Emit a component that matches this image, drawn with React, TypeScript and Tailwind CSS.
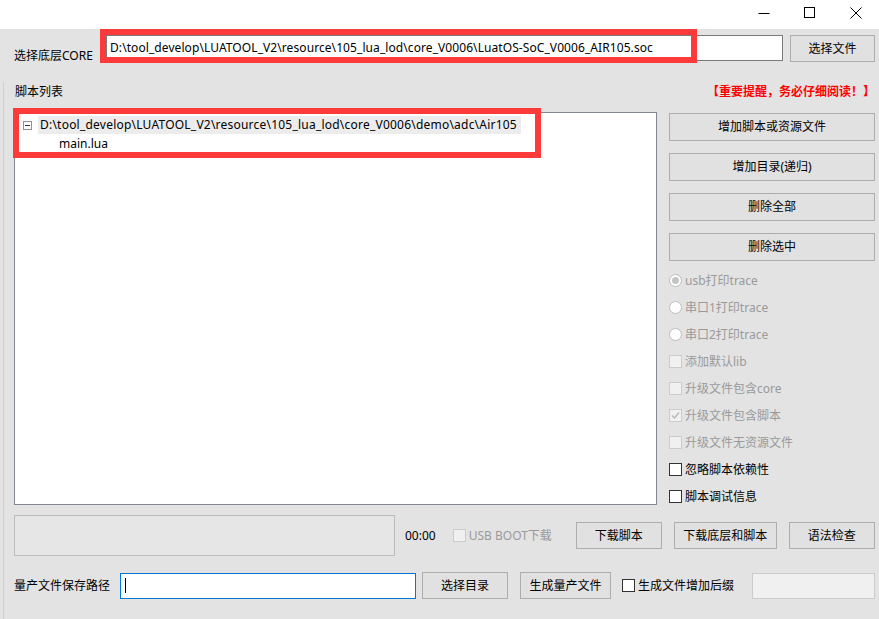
import React from 'react';

const FONT = { fontFamily: '"Noto Sans", "Noto Sans CJK SC", sans-serif' };

function Btn({ label, className = '' }: { label: string; className?: string }) {
  return (
    <div
      className={`h-[27px] flex items-center justify-center bg-[#e1e1e1] border border-[#adadad] text-[12px] text-black ${className}`}
    >
      {label}
    </div>
  );
}

function Radio({ label, checked }: { label: string; checked?: boolean }) {
  return (
    <div className="h-[27px] flex items-center gap-[3px] text-[12px] text-[#9a9a9a]">
      <span className="w-[13px] h-[13px] rounded-full border border-[#bcbcbc] bg-white flex items-center justify-center">
        {checked && <span className="w-[7px] h-[7px] rounded-full bg-[#c4c4c4]" />}
      </span>
      {label}
    </div>
  );
}

function Check({ label, checked, disabled }: { label: string; checked?: boolean; disabled?: boolean }) {
  return (
    <div className={`h-[27px] flex items-center gap-[3px] text-[12px] ${disabled ? 'text-[#9a9a9a]' : 'text-black'}`}>
      <span
        className={`w-[13px] h-[13px] border flex items-center justify-center ${
          disabled ? 'border-[#cccccc] bg-[#f0f0f0]' : 'border-[#333333] bg-white'
        }`}
      >
        {checked && (
          <svg width="9" height="9" viewBox="0 0 9 9">
            <path d="M1 4.5 L3.5 7 L8 1.5" fill="none" stroke="#b5b5b5" strokeWidth="1.2" />
          </svg>
        )}
      </span>
      {label}
    </div>
  );
}

export default function App() {
  return (
    <div className="w-[879px] h-[619px] bg-[#e3e3e3] overflow-hidden text-black" style={FONT}>
      {/* Title bar */}
      <div className="h-[29px] bg-white flex items-start justify-end">
        <div className="w-[46px] h-[26px] flex items-center justify-center">
          <svg width="12" height="12" viewBox="0 0 12 12">
            <path d="M0.5 6.5 H11.5" stroke="#000" strokeWidth="1" />
          </svg>
        </div>
        <div className="w-[46px] h-[26px] flex items-center justify-center">
          <svg width="12" height="12" viewBox="0 0 12 12">
            <rect x="0.5" y="0.5" width="10" height="10" fill="none" stroke="#000" strokeWidth="1" />
          </svg>
        </div>
        <div className="w-[46px] h-[26px] flex items-center justify-center">
          <svg width="12" height="12" viewBox="0 0 12 12">
            <path d="M0.5 0.5 L11.5 11.5 M11.5 0.5 L0.5 11.5" stroke="#000" strokeWidth="1" />
          </svg>
        </div>
      </div>

      {/* Core row */}
      <div className="h-[33px] flex items-start pt-[6px] pl-[14px]">
        <div className="h-[27px] w-[92px] flex items-center text-[12px] pt-[14px]">选择底层CORE</div>
        <div className="relative">
          <div className="w-[677px] h-[26px] bg-white border border-[#7a7a7a] flex items-center pl-[3px] text-[12px] whitespace-nowrap tracking-[0.08px]">
            D:\tool_develop\LUATOOL_V2\resource\105_lua_lod\core_V0006\LuatOS-SoC_V0006_AIR105.soc
          </div>
          <div className="absolute left-[-6px] top-[-6px] w-[597px] h-[34px] border-[6px] border-[#fd3a3a]" />
        </div>
        <Btn label="选择文件" className="ml-[7px] w-[85px]" />
      </div>

      {/* Body */}
      <div className="ml-[3px] h-[557px] border-l border-[#cfcfcf] pl-[10px] pr-[4px]">
        <div className="h-[20px] mt-[20px] flex items-center justify-between text-[12px]">
          <span className="pl-px">脚本列表</span>
          <span className="font-bold text-[#ff0000]">【重要提醒，务必仔细阅读！】</span>
        </div>

        <div className="mt-[10px] h-[393px] flex gap-[12px]">
          {/* Tree */}
          <div className="relative w-[643px] h-[393px] bg-white border border-[#828790]">
            <div className="pt-[3px] pl-[8px] text-[12px]">
              <div className="h-[18px] flex items-center">
                <span className="w-[9px] h-[9px] border border-[#919191] flex items-center justify-center mr-[6px]">
                  <span className="w-[5px] h-px bg-[#333]" />
                </span>
                <span className="h-[18px] flex items-center bg-[#ececec] pl-[2px] pr-[4px] whitespace-nowrap tracking-[0.22px]">
                  D:\tool_develop\LUATOOL_V2\resource\105_lua_lod\core_V0006\demo\adc\Air105
                </span>
              </div>
              <div className="h-[19px] flex items-center pl-[36px]">main.lua</div>
            </div>
            <div className="absolute left-[-2px] top-[-5px] w-[528px] h-[50px] border-[6px] border-[#fd3a3a]" />
          </div>

          {/* Right column */}
          <div className="w-[206px] flex flex-col">
            <div className="flex flex-col gap-[12px] mt-px">
              <Btn label="增加脚本或资源文件" className="h-[28px]" />
              <Btn label="增加目录(递归)" className="h-[28px]" />
              <Btn label="删除全部" className="h-[28px]" />
              <Btn label="删除选中" className="h-[28px]" />
            </div>
            <div className="mt-[6px] flex flex-col">
              <Radio label="usb打印trace" checked />
              <Radio label="串口1打印trace" />
              <Radio label="串口2打印trace" />
              <Check label="添加默认lib" disabled />
              <Check label="升级文件包含core" disabled />
              <Check label="升级文件包含脚本" disabled checked />
              <Check label="升级文件无资源文件" disabled />
              <Check label="忽略脚本依赖性" />
              <Check label="脚本调试信息" />
            </div>
          </div>
        </div>

        {/* Download row */}
        <div className="mt-[10px] flex items-center">
          <div className="w-[381px] h-[41px] border border-[#bcbcbc] bg-[#e6e6e6]" />
          <span className="ml-[10px] text-[12px]">00:00</span>
          <div className="ml-[17px]">
            <Check label="USB BOOT下载" disabled />
          </div>
          <Btn label="下载脚本" className="ml-[24px] w-[86px]" />
          <Btn label="下载底层和脚本" className="ml-[12px] w-[103px]" />
          <Btn label="语法检查" className="ml-[12px] w-[86px]" />
        </div>

        {/* Mass production row */}
        <div className="mt-[16px] flex items-center">
          <span className="w-[106px] text-[12px]">量产文件保存路径</span>
          <div className="w-[296px] h-[26px] bg-white border border-[#0078d7] flex items-center pl-[4px]">
            <span className="w-px h-[15px] bg-black" />
          </div>
          <Btn label="选择目录" className="ml-[6px] w-[86px]" />
          <Btn label="生成量产文件" className="ml-[12px] w-[91px]" />
          <div className="ml-[11px]">
            <Check label="生成文件增加后缀" />
          </div>
          <div className="ml-auto w-[123px] h-[26px] bg-[#f0f0f0] border border-[#cccccc]" />
        </div>
      </div>
    </div>
  );
}
